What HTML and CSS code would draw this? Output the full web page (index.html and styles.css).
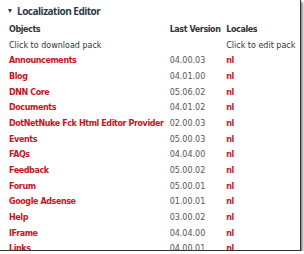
FILE: index.html
```html
<!DOCTYPE html>
<html lang="en">
<head>
  <meta charset="utf-8" />
  <title>Localization Editor</title>
  <link rel="stylesheet" href="styles.css">
</head>
<body>
  <div class="frame">
    <h2 class="title"><span class="arrow"></span>Localization Editor</h2>
    <table class="packs">
      <thead>
        <tr>
          <th class="obj">Objects</th>
          <th class="ver">Last Version</th>
          <th class="loc">Locales</th>
        </tr>
        <tr class="hint">
          <td>Click to download pack</td>
          <td></td>
          <td>Click to edit pack</td>
        </tr>
      </thead>
      <tbody>
        <tr><td><a href="#">Announcements</a></td><td>04.00.03</td><td><a href="#">nl</a></td></tr>
        <tr><td><a href="#">Blog</a></td><td>04.01.00</td><td><a href="#">nl</a></td></tr>
        <tr><td><a href="#">DNN Core</a></td><td>05.06.02</td><td><a href="#">nl</a></td></tr>
        <tr><td><a href="#">Documents</a></td><td>04.01.02</td><td><a href="#">nl</a></td></tr>
        <tr><td><a href="#">DotNetNuke Fck Html Editor Provider</a></td><td>02.00.03</td><td><a href="#">nl</a></td></tr>
        <tr><td><a href="#">Events</a></td><td>05.00.03</td><td><a href="#">nl</a></td></tr>
        <tr><td><a href="#">FAQs</a></td><td>04.04.00</td><td><a href="#">nl</a></td></tr>
        <tr><td><a href="#">Feedback</a></td><td>05.00.02</td><td><a href="#">nl</a></td></tr>
        <tr><td><a href="#">Forum</a></td><td>05.00.01</td><td><a href="#">nl</a></td></tr>
        <tr><td><a href="#">Google Adsense</a></td><td>01.00.01</td><td><a href="#">nl</a></td></tr>
        <tr><td><a href="#">Help</a></td><td>03.00.02</td><td><a href="#">nl</a></td></tr>
        <tr><td><a href="#">IFrame</a></td><td>04.04.00</td><td><a href="#">nl</a></td></tr>
        <tr><td><a href="#">Links</a></td><td>04.00.01</td><td><a href="#">nl</a></td></tr>
      </tbody>
    </table>
  </div>
</body>
</html>
```

FILE: styles.css
```css
html,
body {
  margin: 0;
  padding: 0;
  background: #fff;
  overflow: hidden;
}

.frame {
  width: 301px;
  height: 251px;
  box-sizing: border-box;
  overflow: hidden;
  border-right: 1px solid #333;
  border-bottom: 1px solid #333;
  box-shadow: 2px 2px 2px rgba(0, 0, 0, 0.45);
  font-family: 'DejaVu Sans', Verdana, sans-serif;
  font-size: 8px;
  color: #555;
}

.title {
  display: flex;
  align-items: center;
  margin: 0;
  padding: 3px 0 0 8px;
  height: 15px;
  font-family: 'Open Sans', sans-serif;
  font-size: 10px;
  font-weight: bold;
  letter-spacing: -0.5px;
  color: #2e3a4a;
}

.arrow {
  width: 0;
  height: 0;
  margin-right: 5px;
  border-left: 2.5px solid transparent;
  border-right: 2.5px solid transparent;
  border-top: 4px solid #2e3a4a;
}

.packs {
  border-collapse: collapse;
  table-layout: fixed;
  margin: 4px 0 0 9px;
}

.packs th,
.packs td {
  padding: 0;
  height: 15.67px;
  text-align: left;
  white-space: nowrap;
}

.packs th {
  color: #333;
  font-weight: bold;
  letter-spacing: -0.4px;
  height: 15px;
}

.packs .hint td {
  color: #333;
  height: 16px;
}

.packs .obj {
  width: 161px;
}

.packs .ver {
  width: 57px;
}

.packs .loc {
  width: 74px;
}

.packs a {
  color: #cc1122;
  font-weight: bold;
  letter-spacing: -0.4px;
  text-decoration: none;
}
```
